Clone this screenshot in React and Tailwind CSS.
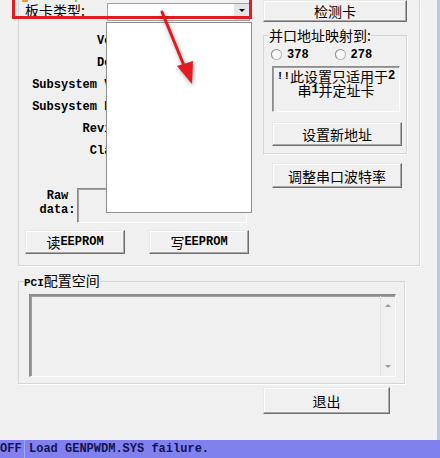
import React from 'react'

const cjk = "font-['Noto_Sans_CJK_SC',sans-serif]"
const mono = "font-['Liberation_Mono',monospace] font-bold"

const LABELS = ['Vendor ID:', 'Device ID:', 'Subsystem VendorID:', 'Subsystem DeviceID:', 'Revision ID:', 'Class Code:']

function Btn({ className = '', children }) {
  return (
    <button
      className={`flex items-center justify-center bg-[#f0f0f0] border border-t-[#e8e8e8] border-l-[#e8e8e8] border-r-[#6e6e6e] border-b-[#6e6e6e] shadow-[inset_-1px_-1px_0_#a8a8a8,inset_1px_1px_0_#ffffff] text-[14px] leading-none text-black ${className}`}
    >
      {children}
    </button>
  )
}

function Sunken({ className = '', children }) {
  return (
    <div className={`border border-t-[#8c8c8c] border-l-[#8c8c8c] border-r-white border-b-white shadow-[inset_1px_1px_0_#a0a0a0] ${className}`}>
      {children}
    </div>
  )
}

function Radio({ label }) {
  return (
    <div className="flex items-center">
      <span className="w-[11px] h-[11px] rounded-full border border-[#b8b8b8] bg-[#f7f7f7] border-l-[#8a8a8a] border-t-[#8a8a8a]" />
      <span className={`${mono} text-[12px] ml-[5px] leading-none`}>{label}</span>
    </div>
  )
}

function Group({ title, className = '', children }) {
  return (
    <fieldset className={`border border-[#d5d5d5] shadow-[1px_1px_0_#ffffff] ${className}`}>
      <legend className="ml-[5px] px-0 leading-[16px]">{title}</legend>
      {children}
    </fieldset>
  )
}

export default function App() {
  return (
    <div className={`w-[440px] h-[458px] flex flex-col bg-[#f0f0f0] overflow-hidden text-black ${cjk}`}>
      <div className="relative h-[440px] border-r-[3px] border-[#b3cce6]">
        {/* device info group, top edge scrolled away */}
        <div className="ml-[18px] w-[402px] h-[266px] border-x border-b border-[#d5d5d5] shadow-[1px_1px_0_#ffffff] flex">
          <div className="w-[244px] flex flex-col">
            <div className="h-[22px] flex items-start">
              <span className="ml-[6px] mt-[1px] w-[82px] text-[14px] leading-[18px]">板卡类型:</span>
              <div className="mt-[3px] w-[143px] h-[18px] bg-white border border-[#a0a0a0] flex justify-end">
                <div className="w-[15px] h-full bg-[#e4e4e4] flex items-start justify-center pt-[5px]">
                  <span className="w-0 h-0 border-x-[3px] border-x-transparent border-t-[3px] border-t-black" />
                </div>
              </div>
            </div>

            <div className="mt-[8px] flex flex-col">
              {LABELS.map(l => (
                <div key={l} className={`w-[150px] h-[22px] flex items-center justify-end whitespace-nowrap ${mono} text-[12px]`}>
                  {l}
                </div>
              ))}
            </div>

            <div className="mt-[26px] h-[35px] flex">
              <div className={`w-[58px] pl-[19px] pt-[1px] text-center ${mono} text-[12px] leading-[14px]`}>
                Raw<br />data:
              </div>
              <Sunken className="w-[170px] h-[35px] bg-[#f0f0f0]" />
            </div>

            <div className="mt-[7px] ml-[6px] flex gap-[24px]">
              <Btn className="w-[100px] h-[24px]">读<span className={`${mono} text-[12px]`}>EEPROM</span></Btn>
              <Btn className="w-[100px] h-[24px]">写<span className={`${mono} text-[12px]`}>EEPROM</span></Btn>
            </div>
          </div>

          <div className="w-[144px] flex flex-col">
            <Btn className="w-[144px] h-[22px]">检测卡</Btn>
            <Group title="并口地址映射到:" className="mt-[5px] h-[127px] text-[14px]">
              <div className="pl-[7px] pt-[4px] h-[19px] flex items-center gap-[26px]">
                <Radio label="378" />
                <Radio label="278" />
              </div>
              <Sunken className="ml-[8px] mt-[4px] w-[128px] h-[46px] pt-[2px] flex flex-col items-center text-[14px] leading-none">
                <div className="h-[14px] flex items-center">
                  <span className={`${mono} text-[11px]`}>!!</span>此设置只适用于<span className={`${mono} text-[12px]`}>2</span>
                </div>
                <div className="h-[14px] flex items-center">
                  串<span className={`${mono} text-[12px]`}>1</span>并定址卡
                </div>
              </Sunken>
              <Btn className="ml-[8px] mt-[10px] w-[130px] h-[24px]">设置新地址</Btn>
            </Group>
            <Btn className="ml-[9px] mt-[9px] w-[130px] h-[25px]">调整串口波特率</Btn>
          </div>
        </div>

        <Group
          title={<><span className={`${mono} text-[11px]`}>PCI</span><span className="text-[14px]">配置空间</span></>}
          className="ml-[18px] mt-[5px] w-[387px] h-[113px]"
        >
          <Sunken className="ml-[10px] mt-[3px] w-[367px] h-[83px] bg-[#f0f0f0] border-t-2 border-l-2 flex justify-end">
            <div className="w-[15px] h-full border-l border-[#e2e2e2] flex flex-col items-center justify-between py-[8px]">
              <span className="w-0 h-0 border-x-[3px] border-x-transparent border-b-[3px] border-b-[#9a9a9a]" />
              <span className="w-0 h-0 border-x-[3px] border-x-transparent border-t-[3px] border-t-[#9a9a9a]" />
            </div>
          </Sunken>
        </Group>

        <Btn className="ml-[263px] mt-[3px] w-[127px] h-[27px]">退出</Btn>

        {/* open combo list */}
        <div className="absolute left-[106px] top-[22px] w-[146px] h-[191px] bg-white border border-[#8e8e8e]" />

        {/* site watermark */}
        <div className="absolute left-[22px] -top-[5px] w-[6px] h-[7px] bg-[#f29a3a]" />
        <div className="absolute left-[38px] -top-[14px] text-[14px] leading-[16px] font-bold text-[#8cc152] font-['Liberation_Sans',sans-serif]">
          www.pc0359.cn
        </div>

        {/* callout box and arrow */}
        <div className="absolute left-[12px] -top-[5px] w-[240px] h-[24px] border-[3px] border-[#e11b22]" />
        <svg className="absolute left-[150px] top-[5px] drop-shadow-[1px_2px_2px_rgba(0,0,0,0.35)]" width="60" height="90" viewBox="150 5 60 90">
          <line x1="162" y1="12" x2="185" y2="68" stroke="#e11b22" strokeWidth="3" strokeLinecap="round" />
          <polygon points="192,84 177,66 193,61" fill="#e11b22" />
        </svg>
      </div>

      <div className={`h-[18px] bg-[#8080ef] flex items-center text-[12px] ${mono} text-[#141452]`}>
        <span className="w-[24px]">OFF</span>
        <span className="h-full border-l border-[#a4a4f6]" />
        <span className="ml-[4px]">Load GENPWDM.SYS failure.</span>
      </div>
    </div>
  )
}
